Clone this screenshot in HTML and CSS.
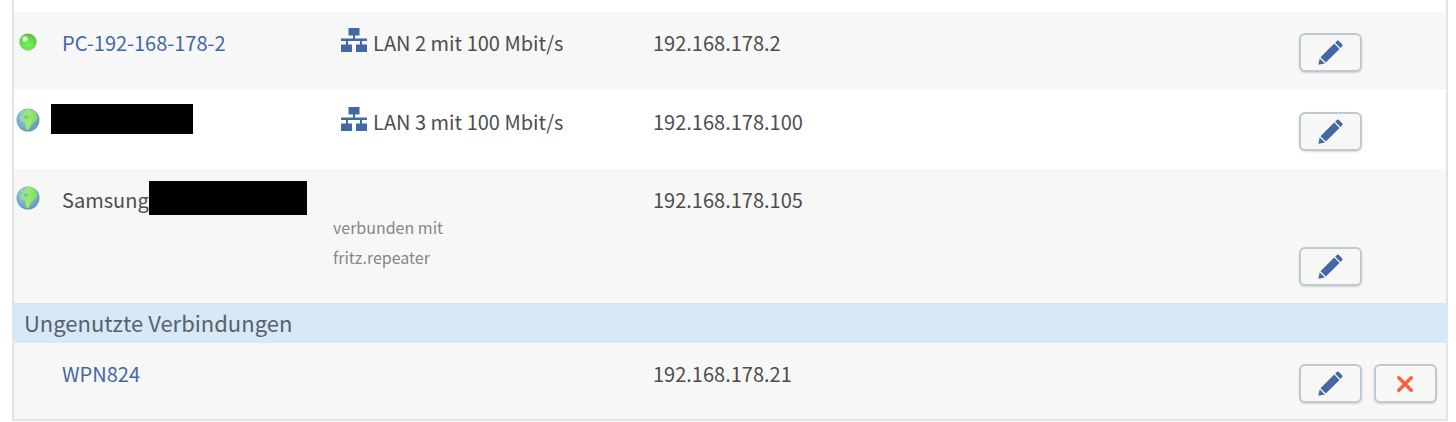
FILE: index.html
```html
<!DOCTYPE html>
<html lang="de">
<head>
    <meta charset="UTF-8">
    <meta name="viewport" content="width=device-width, initial-scale=1.0">
    <title>Netzwerkverbindungen</title>
    <link rel="stylesheet" href="styles.css">
</head>
<body>

    <!-- Shared icons -->
    <svg class="sprite" aria-hidden="true">
        <defs>
            <radialGradient id="ledFill" cx="50%" cy="70%" r="65%">
                <stop offset="0" stop-color="#74f258"/>
                <stop offset="0.6" stop-color="#66dd4c"/>
                <stop offset="1" stop-color="#62b84e"/>
            </radialGradient>
            <radialGradient id="seaFill" cx="42%" cy="38%" r="62%">
                <stop offset="0" stop-color="#9fcfe6"/>
                <stop offset="0.7" stop-color="#74abd0"/>
                <stop offset="1" stop-color="#6795bb"/>
            </radialGradient>
            <linearGradient id="landFill" x1="0" y1="0" x2="1" y2="0">
                <stop offset="0" stop-color="#9bd6a8"/>
                <stop offset="0.5" stop-color="#98ec68"/>
                <stop offset="1" stop-color="#7dda62"/>
            </linearGradient>
        </defs>
        <symbol id="led" viewBox="0 0 24 24">
            <circle cx="12" cy="12" r="9" fill="#b9dfb0"/>
            <circle cx="12" cy="12" r="8.300" fill="url(#ledFill)"/>
            <circle cx="9" cy="9" r="3" fill="#d5fbc9" opacity="0.7"/>
            <circle cx="9" cy="9" r="1.500" fill="#fff"/>
        </symbol>
        <symbol id="globe" viewBox="0 0 24 24">
            <circle cx="12" cy="12" r="11.500" fill="url(#seaFill)"/>
            <path fill="url(#landFill)" d="M8 3 11 1l5 .5 4 3.500 1.500 4-1 3.500-3 1.500-2.500 3-2.500 5-2.500-.5-1-4 .5-3-4-1L3.500 11 5 7.500 8 6z"/>
            <path fill="#78b7c4" d="M7.500 8.500l3-1 2.500 1.500-1.500 1.500-3-.3z"/>
            <path fill="#a8e0b8" opacity="0.7" d="M3 6.500 6 3l2-.5-1 3z"/>
        </symbol>
        <symbol id="lan" viewBox="0 0 26 24">
            <path fill="#4369a5" d="M7.500 0h11v7.500h-11zM12 7h2v4h-2zM0 10.500h26v2.500h-26zM5 12h2v5h-2zM19 12h2v5h-2zM0 16.500h11v7.500h-11zM15 16.500h11v7.500h-11z"/>
        </symbol>
        <symbol id="pencil" viewBox="0 0 25 25">
            <path fill="#4369a5" d="M2.500 17.300 16.200 3.600l5.300 5.300L7.800 22.600zM.3 24.700 1.700 18.500l5.200 4.900zM17.200 2.700l1.900-2q.8-.6 1.600 0l3.600 3.700q.5.800 0 1.500l-1.900 2z"/>
        </symbol>
        <symbol id="cross" viewBox="0 0 16 16">
            <path fill="none" stroke="#f9623e" stroke-width="3.400" stroke-linecap="round" d="M1.800 1.800 14.200 14.200M14.200 1.800 1.800 14.200"/>
        </symbol>
    </svg>

    <main>
        <table class="devices">
            <colgroup>
                <col class="col-state">
                <col class="col-name">
                <col class="col-link">
                <col>
                <col class="col-actions">
            </colgroup>
            <tbody>
                <tr class="spacer"><td colspan="5"></td></tr>
                <tr class="shaded">
                    <td class="state"><svg class="dot" role="img" aria-label="verbunden"><use href="#led"/></svg></td>
                    <td class="name"><a href="#">PC-192-168-178-2</a></td>
                    <td><span class="lan"><svg class="lan-icon" aria-hidden="true"><use href="#lan"/></svg>LAN 2 mit 100 Mbit/s</span></td>
                    <td>192.168.178.2</td>
                    <td class="actions">
                        <div class="buttons">
                            <button type="button" aria-label="Bearbeiten"><svg class="pencil"><use href="#pencil"/></svg></button>
                        </div>
                    </td>
                </tr>
                <tr class="plain">
                    <td class="state online"><svg class="dot" role="img" aria-label="online"><use href="#globe"/></svg></td>
                    <td class="name covered"><span class="redacted"></span></td>
                    <td><span class="lan"><svg class="lan-icon" aria-hidden="true"><use href="#lan"/></svg>LAN 3 mit 100 Mbit/s</span></td>
                    <td>192.168.178.100</td>
                    <td class="actions">
                        <div class="buttons">
                            <button type="button" aria-label="Bearbeiten"><svg class="pencil"><use href="#pencil"/></svg></button>
                        </div>
                    </td>
                </tr>
                <tr class="shaded repeater">
                    <td class="state online"><svg class="dot" role="img" aria-label="online"><use href="#globe"/></svg></td>
                    <td class="name"><span class="partial">Samsung<span class="redacted wide"></span></span></td>
                    <td><div class="via">verbunden mit<br>fritz.repeater</div></td>
                    <td>192.168.178.105</td>
                    <td class="actions">
                        <div class="buttons">
                            <button type="button" aria-label="Bearbeiten"><svg class="pencil"><use href="#pencil"/></svg></button>
                        </div>
                    </td>
                </tr>
            </tbody>
            <tbody>
                <tr>
                    <th colspan="5" scope="rowgroup">Ungenutzte Verbindungen</th>
                </tr>
                <tr class="shaded last">
                    <td class="state"></td>
                    <td class="name"><a href="#">WPN824</a></td>
                    <td></td>
                    <td>192.168.178.21</td>
                    <td class="actions">
                        <div class="buttons">
                            <button type="button" aria-label="Bearbeiten"><svg class="pencil"><use href="#pencil"/></svg></button>
                            <button type="button" aria-label="Löschen"><svg class="cross"><use href="#cross"/></svg></button>
                        </div>
                    </td>
                </tr>
            </tbody>
        </table>
    </main>

</body>
</html>
```
FILE: styles.css
```css
* {
    box-sizing: border-box;
}
body {
    margin: 0;
    background: #fff;
    color: #4d4d4d;
    font-family: "Noto Sans CJK SC", "Noto Sans", sans-serif;
    font-size: 20px;
    line-height: 30px;
}
main {
    padding: 0 8px 0 12px;
}
a {
    color: #4369a5;
    text-decoration: none;
}
a:hover {
    text-decoration: underline;
}
.sprite {
    position: absolute;
    width: 0;
    height: 0;
}
.devices {
    width: 100%;
    table-layout: fixed;
    border-collapse: separate;
    border-spacing: 0;
}
.col-state {
    width: 39px;
}
.col-name {
    width: 272px;
}
.col-link {
    width: 320px;
}
.col-actions {
    width: 158px;
}
.devices td {
    padding: 16px 0 0 10px;
    vertical-align: top;
}
/* Outer frame is drawn by the edge cells so the section bar can cover it */
.devices td:first-child {
    border-left: 2px solid #e3e3e3;
}
.devices td:last-child {
    border-right: 2px solid #e3e3e3;
}
.devices .spacer td {
    height: 12px;
    padding: 0;
}
.shaded td {
    background: #f7f7f7;
}
.plain td {
    border-top: 1px solid #fff;
}
.last td {
    border-bottom: 2px solid #e3e3e3;
}
.devices .state {
    padding: 18px 0 0 2px;
}
.devices .online {
    padding-top: 17px;
}
.devices .name {
    padding-left: 11px;
}
.devices .covered {
    padding: 13px 0 0;
}
.dot {
    display: block;
    width: 24px;
    height: 24px;
}
.redacted {
    display: block;
    width: 142px;
    height: 30px;
    background: #000;
}
.partial {
    position: relative;
}
/* Bar lies over the end of the device name */
.wide {
    position: absolute;
    top: -4px;
    left: 87px;
    width: 158px;
    height: 34px;
}
.lan {
    display: flex;
    gap: 6px;
    padding-left: 8px;
}
.lan-icon {
    width: 26px;
    height: 24px;
}
.via {
    padding: 27px 0 31px;
    color: #868686;
    font-size: 16px;
}
.devices .actions {
    padding: 21px 9px 18px;
    vertical-align: bottom;
}
.devices .repeater .actions {
    padding-bottom: 17px;
}
.devices .last .actions {
    padding-bottom: 16px;
}
.buttons {
    display: flex;
    gap: 12px;
}
button {
    display: flex;
    flex: none;
    align-items: center;
    justify-content: center;
    width: 63px;
    height: 39px;
    padding: 0;
    background: #f7f7f6;
    border: 2px solid #bccbd3;
    border-radius: 6px;
    box-shadow: 0 1px 2px rgba(0, 0, 0, 0.15);
    cursor: pointer;
}
button:hover {
    background: #fff;
}
.pencil {
    width: 25px;
    height: 25px;
}
.cross {
    width: 16px;
    height: 16px;
}
th {
    height: 40px;
    padding: 3px 12px 6px;
    border-top: 1px solid #dde3e8;
    background: #d7e8f6;
    color: #56626d;
    font-size: 22px;
    font-weight: normal;
    text-align: left;
}
```
